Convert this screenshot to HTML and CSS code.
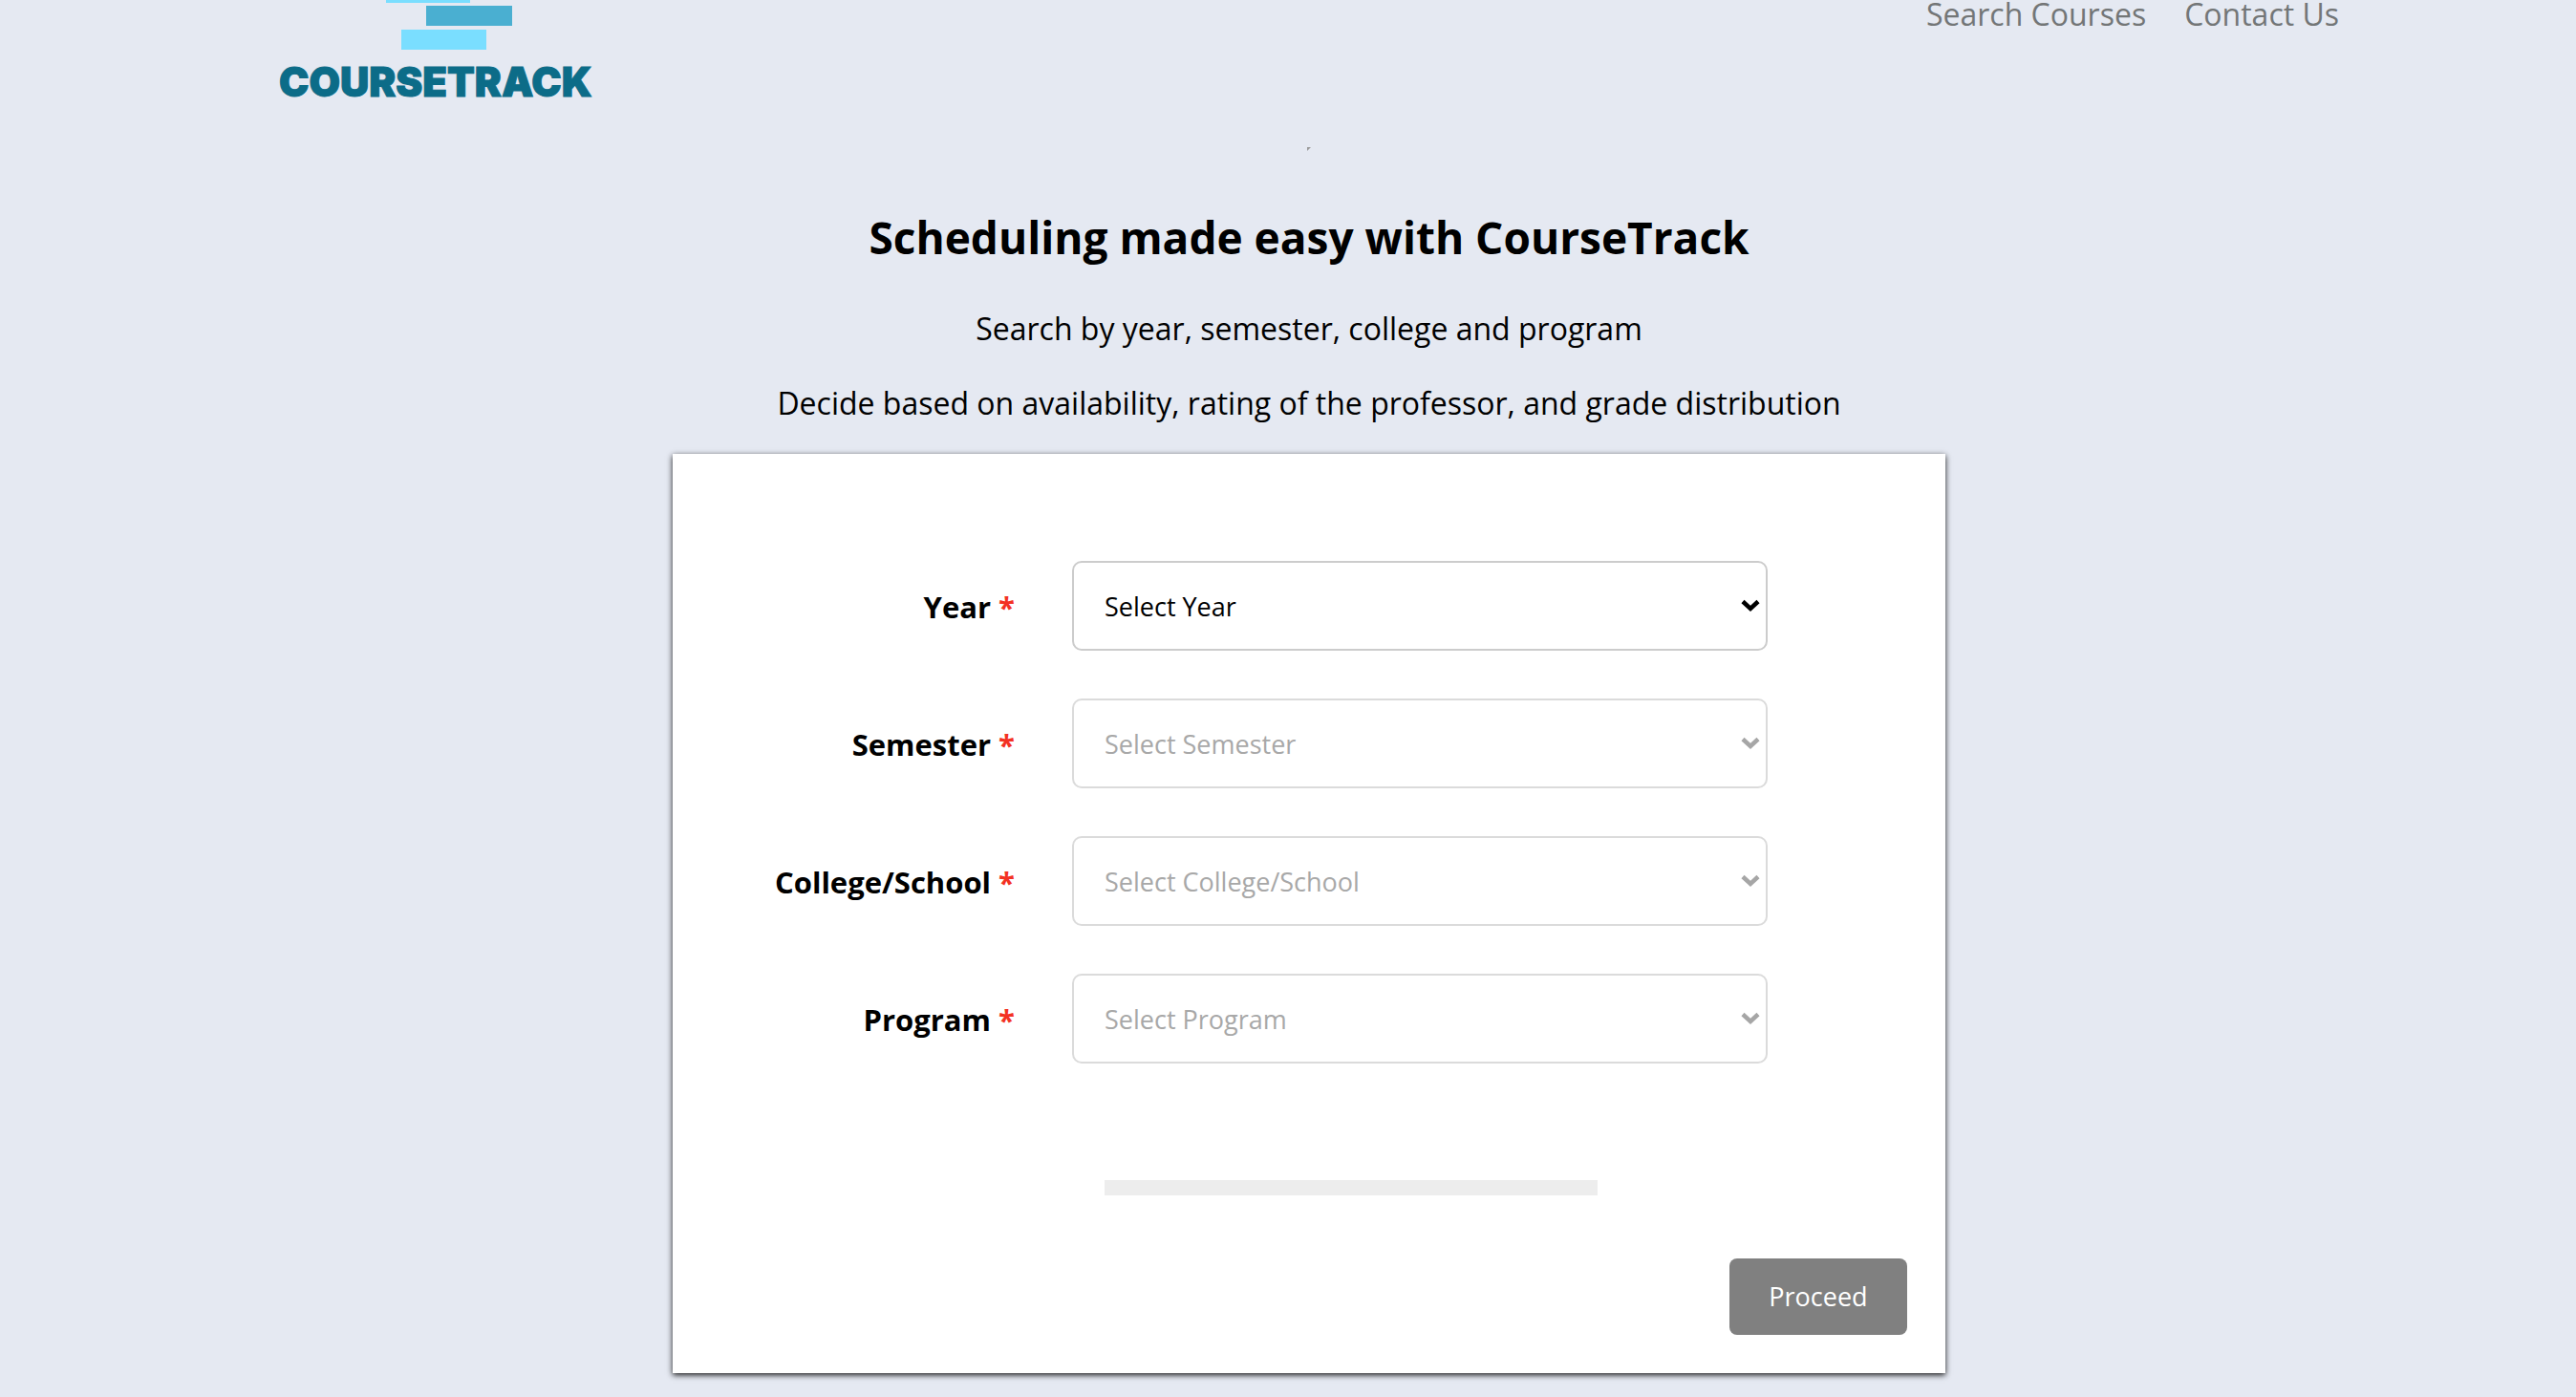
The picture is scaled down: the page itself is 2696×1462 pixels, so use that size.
FILE: index.html
```
<!DOCTYPE html>
<html lang="en">
<head>
<meta charset="utf-8">
<title>CourseTrack</title>
<link rel="stylesheet" href="styles.css">
</head>
<body>
<div class="page">
  <header class="header">
    <a class="logo" href="#" aria-label="CourseTrack home">
      <svg class="logo-art" viewBox="0 0 330 110" width="330" height="110">
        <rect x="112" y="-18" width="88" height="21" fill="#7adeff"/>
        <rect x="154" y="6" width="90" height="21" fill="#4aafd1"/>
        <rect x="128" y="31" width="89" height="21" fill="#7adeff"/>
        <text class="logo-name" x="0" y="101">COURSETRACK</text>
      </svg>
    </a>
    <nav class="nav">
      <a class="nav-link" href="#">Search Courses</a>
      <a class="nav-link" href="#">Contact Us</a>
    </nav>
  </header>
  <main class="main">
    <hr class="divider">
    <h1 class="title">Scheduling made easy with CourseTrack</h1>
    <p class="lead">Search by year, semester, college and program</p>
    <p class="lead">Decide based on availability, rating of the professor, and grade distribution</p>
    <form class="card">
      <div class="fields">
        <label class="label" for="year">Year <span class="required">*</span></label>
        <select class="select" id="year"><option>Select Year</option></select>
        <label class="label" for="semester">Semester <span class="required">*</span></label>
        <select class="select" id="semester" disabled><option>Select Semester</option></select>
        <label class="label" for="college">College/School <span class="required">*</span></label>
        <select class="select" id="college" disabled><option>Select College/School</option></select>
        <label class="label" for="program">Program <span class="required">*</span></label>
        <select class="select" id="program" disabled><option>Select Program</option></select>
        <progress class="progress" value="0" max="100" aria-label="Form progress"></progress>
      </div>
      <div class="actions">
        <button class="proceed" type="submit" disabled>Proceed</button>
      </div>
    </form>
  </main>
</div>
</body>
</html>
```
FILE: styles.css
```
* { box-sizing: border-box; }

body {
  margin: 0;
  background: #e5e9f2;
  color: #000;
  font: 400 32px/40px "Open Sans", "Noto Sans", sans-serif;
}

.page { padding-left: 44px; }

.header {
  display: flex;
  justify-content: space-between;
  align-items: flex-start;
  height: 154px;
  padding: 0 248px;
}

.logo-art { display: block; }

.logo-name {
  font: 900 42px Inter, sans-serif;
  fill: #0c6c88;
  stroke: #0c6c88;
  stroke-width: 1px;
}

.nav {
  display: flex;
  gap: 40px;
  line-height: 30px;
}

.nav-link {
  color: #737677;
  text-decoration: none;
}

.main {
  display: flex;
  flex-direction: column;
  align-items: center;
  padding-bottom: 22px;
  text-align: center;
}

.divider {
  width: 4px;
  margin: 0;
  border: 2px solid;
  border-color: #9a9a9a #e5e9f2 #e5e9f2 #9a9a9a;
}

.title {
  margin: 60px 0 46px;
  font-size: 46px;
  font-weight: 700;
  line-height: 60px;
}

.lead { margin: 0 0 38px; }

.lead + .lead { margin-bottom: 33px; }

.card {
  width: 100%;
  max-width: 1332px;
  padding: 112px 40px 40px;
  background: #fff;
  box-shadow: 0 2px 6px rgba(0, 0, 0, 0.9);
}

.fields {
  display: grid;
  grid-template-columns: 318px 1fr;
  gap: 50px 60px;
  align-items: center;
  padding-right: 146px;
}

.label {
  padding-top: 2px;
  font-size: 31px;
  font-weight: 700;
  text-align: right;
}

.required { color: #f33223; }

.select {
  appearance: none;
  width: 100%;
  height: 94px;
  padding: 2px 32px 0;
  border: 2px solid #ccc;
  border-radius: 10px;
  background: #fff url("data:image/svg+xml,%3Csvg xmlns='http://www.w3.org/2000/svg' width='20' height='14'%3E%3Cpath d='M2 2.500L10 10L18 2.500' fill='none' stroke='%23000' stroke-width='4.500'/%3E%3C/svg%3E") no-repeat right 6px center;
  color: #000;
  font: inherit;
  font-size: 27px;
}

.select:disabled {
  border-color: #dbdbdb;
  background-image: url("data:image/svg+xml,%3Csvg xmlns='http://www.w3.org/2000/svg' width='20' height='14'%3E%3Cpath d='M2 2.500L10 10L18 2.500' fill='none' stroke='%23a6a6a6' stroke-width='4.500'/%3E%3C/svg%3E");
  color: #a8a8a8;
  opacity: 1;
}

.progress {
  appearance: none;
  grid-column: 2;
  width: 516px;
  height: 16px;
  margin: 72px 0 0 34px;
  border: 0;
  background: #ededed;
}

.progress::-webkit-progress-bar { background: #ededed; }

.actions {
  display: flex;
  justify-content: flex-end;
  margin-top: 66px;
}

.proceed {
  width: 186px;
  height: 80px;
  border: 0;
  border-radius: 8px;
  background: #808080;
  color: #fff;
  font: inherit;
  font-size: 27px;
  font-weight: 500;
}
```
